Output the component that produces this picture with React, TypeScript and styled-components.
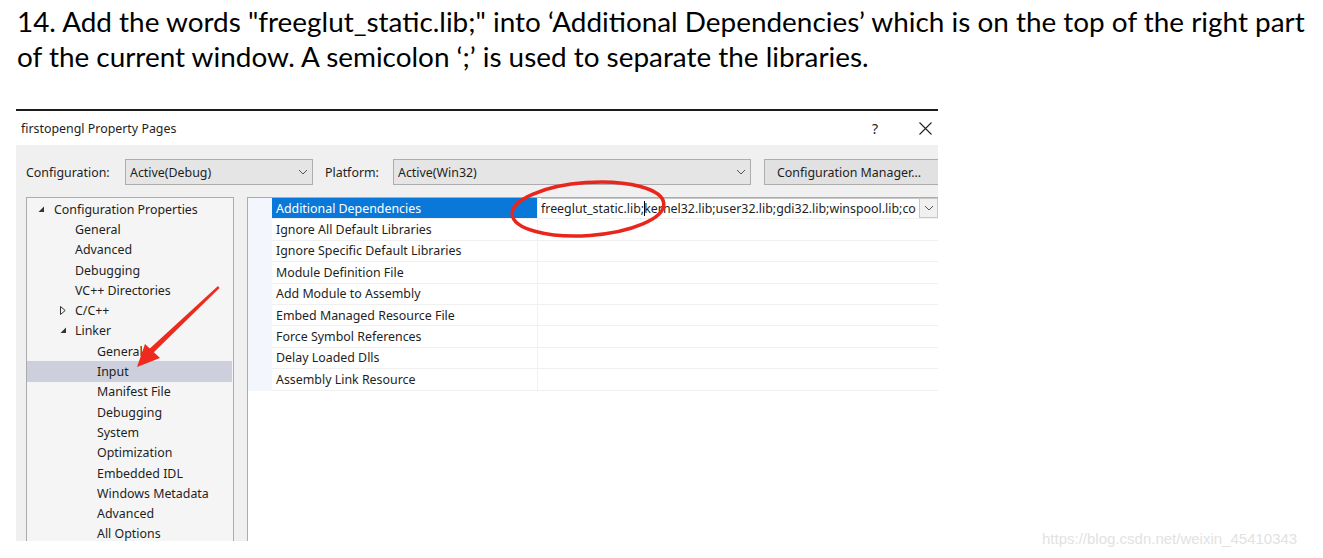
import React from 'react';
import styled, { createGlobalStyle } from 'styled-components';

const Global = createGlobalStyle`
  html, body { margin: 0; padding: 0; background: #ffffff; }
  body { width: 1323px; height: 558px; overflow: hidden; }
`;

const Page = styled.div`
  position: relative;
  width: 1323px;
  height: 558px;
  overflow: hidden;
  background: #ffffff;
`;

const Instruction = styled.div`
  height: 70px;
  padding: 4px 0 0 17px;
  font-family: Lato, "Open Sans", sans-serif;
  font-size: 27.9px;
  line-height: 35px;
  color: #000000;
  white-space: nowrap;
`;

const Dialog = styled.div`
  margin: 35px 0 0 16px;
  width: 922px;
  height: 430px;
  border-top: 2px solid #1c1c1c;
  overflow: hidden;
  display: flex;
  flex-direction: column;
  font-family: "Noto Sans", "Open Sans", sans-serif;
  font-size: 12.4px;
  color: #1e1e1e;
`;

const TitleBar = styled.div`
  height: 34px;
  flex: none;
  display: flex;
  align-items: center;
  padding-left: 5px;
  background: #ffffff;
`;

const Title = styled.span`
  flex: 1;
`;

const HelpButton = styled.span`
  width: 20px;
  margin-right: 33px;
  text-align: center;
  font-size: 14px;
  color: #222;
`;

const CloseButton = styled.span`
  width: 14px;
  height: 14px;
  margin-right: 6px;
  display: flex;
  align-items: center;
  justify-content: center;
`;

const Body = styled.div`
  flex: 1;
  display: flex;
  flex-direction: column;
  background: #f0f0f0;
  padding: 14px 0 0 10px;
  min-height: 0;
`;

const Toolbar = styled.div`
  height: 26px;
  display: flex;
  align-items: center;
  flex: none;
`;

const Label = styled.span<{ $w: number }>`
  width: ${p => p.$w}px;
  flex: none;
`;

const Combo = styled.div<{ $w: number; $mr: number }>`
  width: ${p => p.$w}px;
  margin-right: ${p => p.$mr}px;
  height: 26px;
  box-sizing: border-box;
  flex: none;
  border: 1px solid #adadad;
  background: #e5e5e5;
  display: flex;
  align-items: center;
  padding: 0 4px 0 4px;
`;

const ComboText = styled.span`
  flex: 1;
`;

const Button = styled.div`
  width: 180px;
  height: 26px;
  box-sizing: border-box;
  flex: none;
  border: 1px solid #adadad;
  background: #e1e1e1;
  display: flex;
  align-items: center;
  padding-left: 12px;
`;

const Panels = styled.div`
  flex: 1;
  display: flex;
  gap: 13px;
  margin-top: 12px;
  min-height: 0;
`;

const Tree = styled.div`
  width: 208px;
  flex: none;
  box-sizing: border-box;
  border: 1px solid #acacac;
  border-bottom: none;
  background: #f5f5f5;
  padding: 1px 1px 0 0;
`;

const TreeRow = styled.div<{ $level: number; $selected?: boolean }>`
  height: 20.3px;
  display: flex;
  align-items: center;
  position: relative;
  padding-left: ${p => [27, 48, 70][p.$level]}px;
  background: ${p => (p.$selected ? '#cdcfdc' : 'transparent')};
  white-space: nowrap;
`;

const Expander = styled.span<{ $x: number }>`
  position: absolute;
  left: ${p => p.$x}px;
  top: 0;
  height: 100%;
  display: flex;
  align-items: center;
`;

const Grid = styled.div`
  flex: 1;
  box-sizing: border-box;
  border: 1px solid #acacac;
  border-right: none;
  border-bottom: none;
  background: #ffffff;
  display: flex;
  flex-direction: column;
  min-width: 0;
`;

const PropRow = styled.div`
  height: 21.4px;
  flex: none;
  display: flex;
`;

const MarginCell = styled.div`
  width: 24px;
  flex: none;
  background: #f3f6fc;
`;

const NameCell = styled.div<{ $selected?: boolean }>`
  width: 266px;
  flex: none;
  box-sizing: border-box;
  padding-left: 4px;
  display: flex;
  align-items: center;
  background: ${p => (p.$selected ? '#0a78d8' : '#ffffff')};
  color: ${p => (p.$selected ? '#ffffff' : '#1e1e1e')};
  border-right: 1px solid #f0f0f0;
  border-bottom: 1px solid #f0f0f0;
  white-space: nowrap;
`;

const ValueCell = styled.div`
  flex: 1;
  min-width: 0;
  display: flex;
  align-items: center;
  padding-left: 3px;
  white-space: nowrap;
  overflow: hidden;
  border-bottom: 1px solid #f0f0f0;
`;

const EditBox = styled.div`
  flex: 1;
  height: 100%;
  display: flex;
  align-items: center;
  border-top: 1px solid #c8c8c8;
  box-sizing: border-box;
  min-width: 0;
  overflow: hidden;
`;

const Caret = styled.span`
  display: inline-block;
  flex: none;
  width: 1px;
  height: 15px;
  background: #000;
  margin: 0 -1px 0 0;
`;

const DropButton = styled.div`
  width: 19px;
  height: 100%;
  flex: none;
  box-sizing: border-box;
  border: 1px solid #c8c8c8;
  background: #f0f0f0;
  display: flex;
  align-items: center;
  justify-content: center;
`;

const Overlay = styled.svg`
  position: absolute;
  left: 0;
  top: 0;
  pointer-events: none;
`;

const Watermark = styled.span`
  position: absolute;
  left: 1042px;
  top: 530px;
  font-family: "Liberation Sans", Arial, sans-serif;
  font-size: 15px;
  color: #e2e2e2;
  white-space: nowrap;
`;

const Chevron = () => (
  <svg width="10" height="6" viewBox="0 0 10 6">
    <path d="M1 1 L5 5 L9 1" fill="none" stroke="#555" strokeWidth="1" />
  </svg>
);

const CloseGlyph = () => (
  <svg width="13" height="13" viewBox="0 0 13 13">
    <path d="M0.5 0.5 L12.5 12.5 M12.5 0.5 L0.5 12.5" fill="none" stroke="#222" strokeWidth="1.1" />
  </svg>
);

const ExpandedGlyph = () => (
  <svg width="7" height="7" viewBox="0 0 7 7">
    <path d="M6 0.5 L6 6 L0.5 6 Z" fill="#333" />
  </svg>
);

const CollapsedGlyph = () => (
  <svg width="6" height="9" viewBox="0 0 6 9">
    <path d="M0.5 0.5 L5.2 4.5 L0.5 8.5 Z" fill="none" stroke="#333" strokeWidth="1" />
  </svg>
);

type TreeItem = { label: string; level: number; expander?: 'open' | 'closed'; selected?: boolean };

const treeItems: TreeItem[] = [
  { label: 'Configuration Properties', level: 0, expander: 'open' },
  { label: 'General', level: 1 },
  { label: 'Advanced', level: 1 },
  { label: 'Debugging', level: 1 },
  { label: 'VC++ Directories', level: 1 },
  { label: 'C/C++', level: 1, expander: 'closed' },
  { label: 'Linker', level: 1, expander: 'open' },
  { label: 'General', level: 2 },
  { label: 'Input', level: 2, selected: true },
  { label: 'Manifest File', level: 2 },
  { label: 'Debugging', level: 2 },
  { label: 'System', level: 2 },
  { label: 'Optimization', level: 2 },
  { label: 'Embedded IDL', level: 2 },
  { label: 'Windows Metadata', level: 2 },
  { label: 'Advanced', level: 2 },
  { label: 'All Options', level: 2 },
];

const props = [
  'Additional Dependencies',
  'Ignore All Default Libraries',
  'Ignore Specific Default Libraries',
  'Module Definition File',
  'Add Module to Assembly',
  'Embed Managed Resource File',
  'Force Symbol References',
  'Delay Loaded Dlls',
  'Assembly Link Resource',
];

export default function App() {
  return (
    <Page>
      <Global />
      <Instruction>
        14. Add the words "freeglut_static.lib;" into ‘Additional Dependencies’ which is on the top of the right part
        <br />
        of the current window. A semicolon ‘;’ is used to separate the libraries.
      </Instruction>
      <Dialog>
        <TitleBar>
          <Title>firstopengl Property Pages</Title>
          <HelpButton>?</HelpButton>
          <CloseButton>
            <CloseGlyph />
          </CloseButton>
        </TitleBar>
        <Body>
          <Toolbar>
            <Label $w={99}>Configuration:</Label>
            <Combo $w={188} $mr={12}>
              <ComboText>Active(Debug)</ComboText>
              <Chevron />
            </Combo>
            <Label $w={68}>Platform:</Label>
            <Combo $w={358} $mr={13}>
              <ComboText>Active(Win32)</ComboText>
              <Chevron />
            </Combo>
            <Button>Configuration Manager...</Button>
          </Toolbar>
          <Panels>
            <Tree>
              {treeItems.map((t, i) => (
                <TreeRow key={i} $level={t.level} $selected={t.selected}>
                  {t.expander && (
                    <Expander $x={[11, 33][t.level]}>
                      {t.expander === 'open' ? <ExpandedGlyph /> : <CollapsedGlyph />}
                    </Expander>
                  )}
                  {t.label}
                </TreeRow>
              ))}
            </Tree>
            <Grid>
              {props.map((p, i) => (
                <PropRow key={p}>
                  <MarginCell />
                  <NameCell $selected={i === 0}>{p}</NameCell>
                  {i === 0 ? (
                    <ValueCell>
                      <EditBox>
                        freeglut_static.lib;<Caret />kernel32.lib;user32.lib;gdi32.lib;winspool.lib;co
                      </EditBox>
                      <DropButton>
                        <Chevron />
                      </DropButton>
                    </ValueCell>
                  ) : (
                    <ValueCell />
                  )}
                </PropRow>
              ))}
            </Grid>
          </Panels>
        </Body>
      </Dialog>
      <Overlay width="1323" height="558" viewBox="0 0 1323 558">
        <ellipse cx="588" cy="209" rx="76" ry="26.5" fill="none" stroke="#e8261c" strokeWidth="3.5" transform="rotate(-4 588 209)" />
        <polygon points="218,286 219.5,288 150,356 146,352" fill="#ee2a1e" />
        <polygon points="137,367 145,344 160,358" fill="#ee2a1e" />
      </Overlay>
      <Watermark>https://blog.csdn.net/weixin_45410343</Watermark>
    </Page>
  );
}
